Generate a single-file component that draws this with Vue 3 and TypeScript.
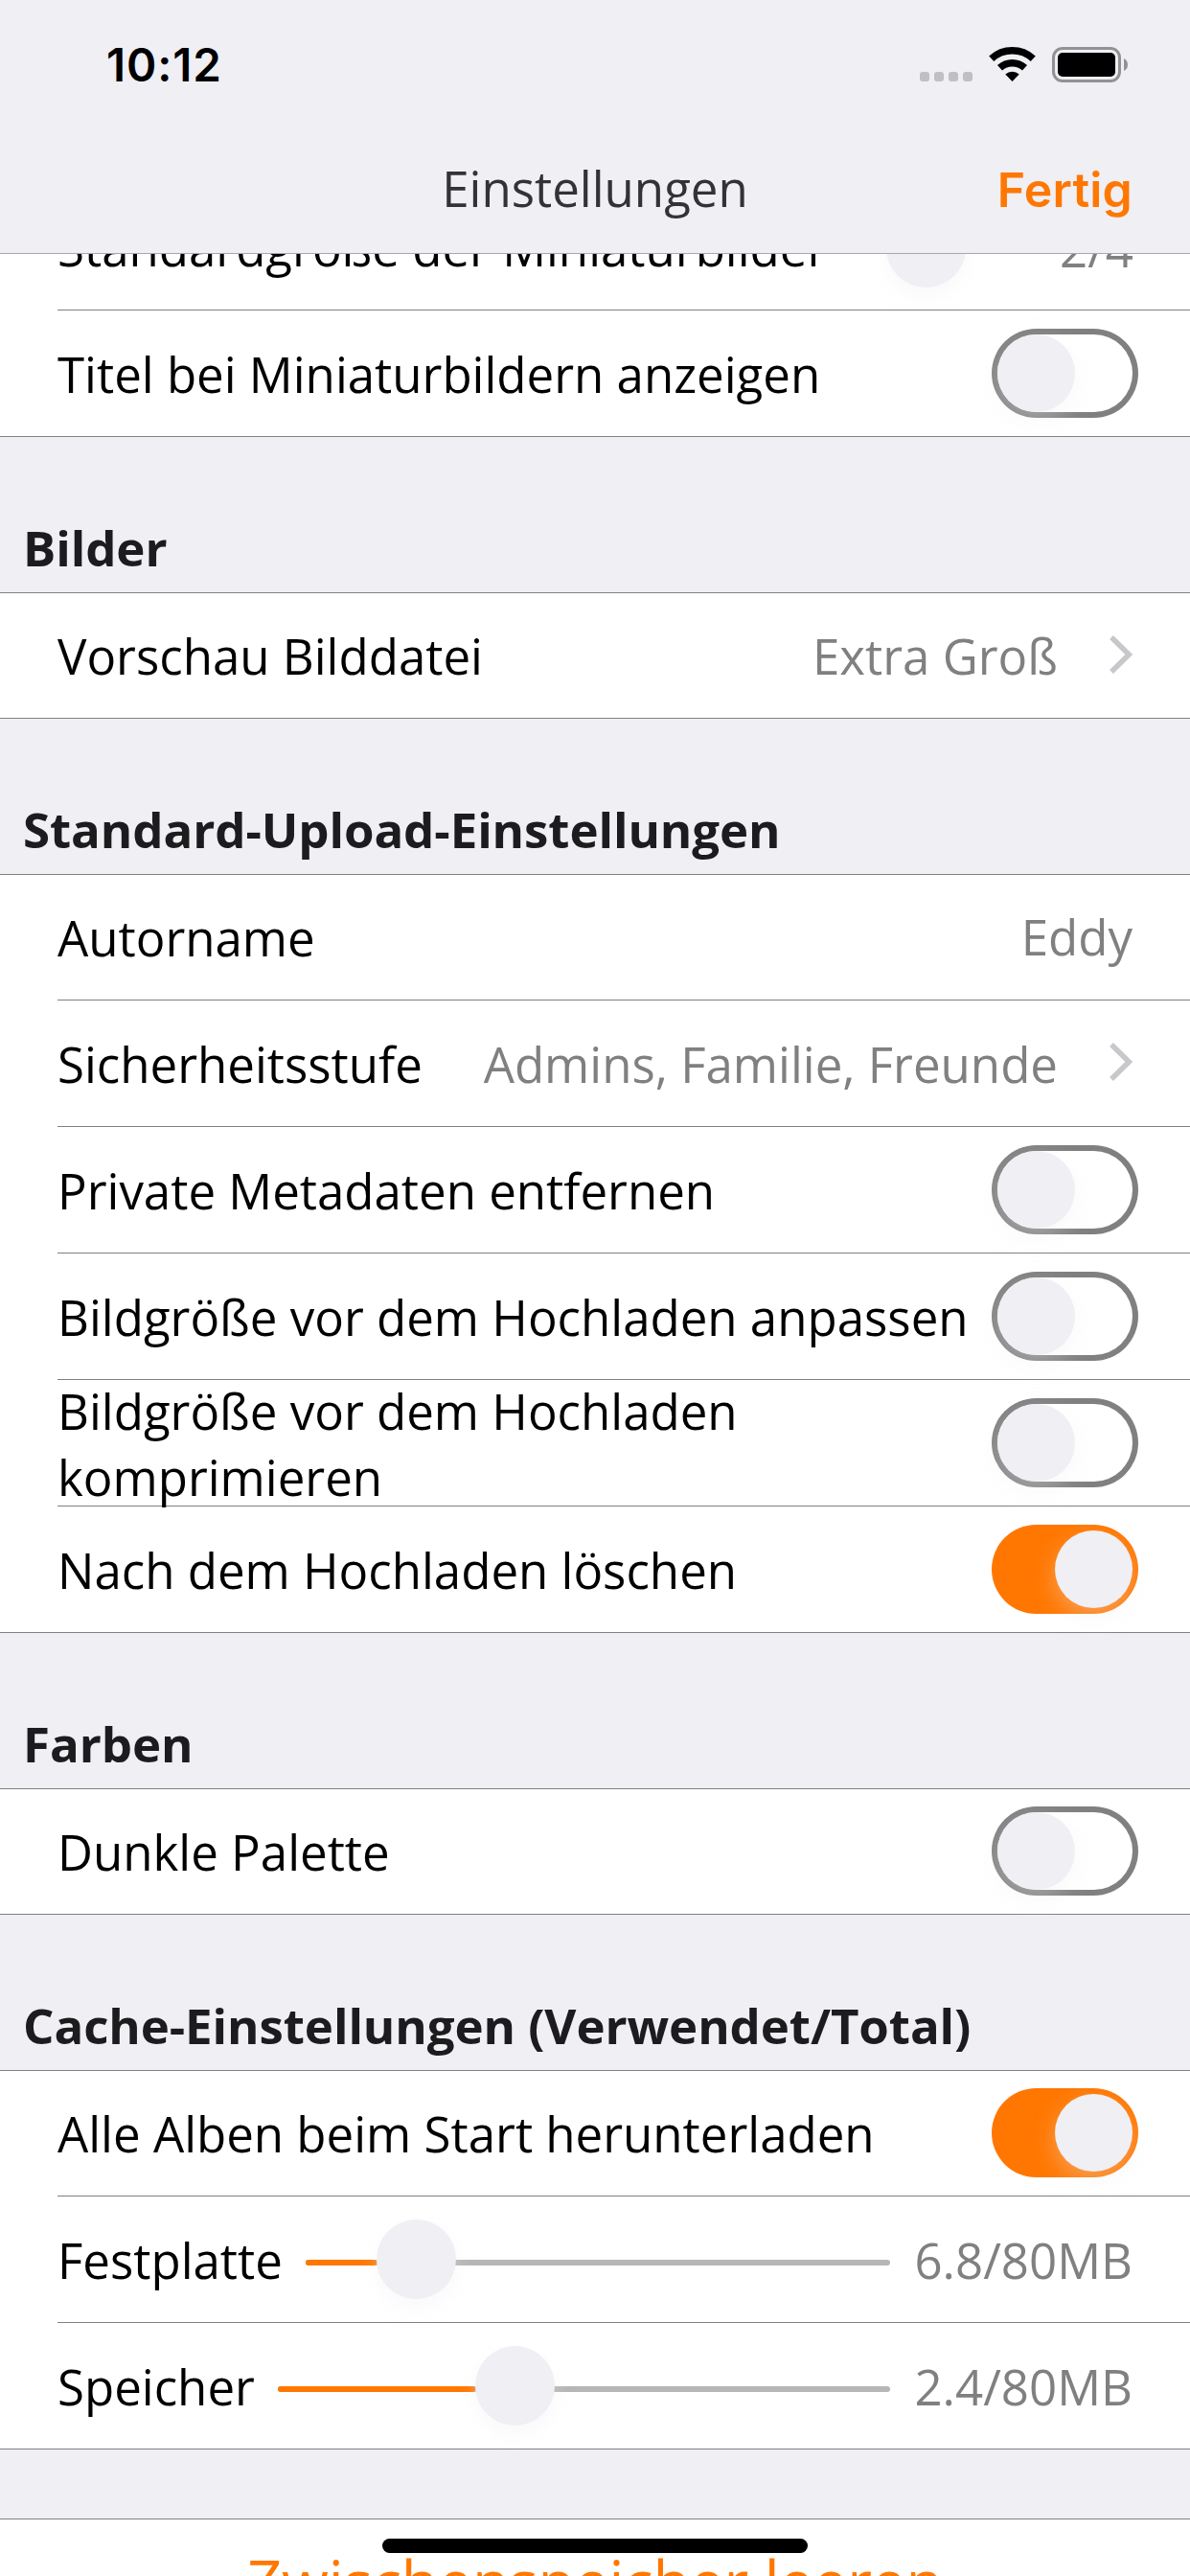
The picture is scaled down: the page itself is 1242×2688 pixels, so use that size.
<script setup lang="ts">
interface Row {
  label: string
  kind: 'switch' | 'link' | 'value' | 'slider'
  on?: boolean
  value?: string
  trackWidth?: number
  thumb?: number
}
interface Group {
  title: string
  rows: Row[]
}

const groups: Group[] = [
  {
    title: '',
    rows: [
      { label: 'Standardgröße der Miniaturbilder', kind: 'slider', value: '2/4', trackWidth: 205, thumb: 49 },
      { label: 'Titel bei Miniaturbildern anzeigen', kind: 'switch', on: false },
    ],
  },
  {
    title: 'Bilder',
    rows: [{ label: 'Vorschau Bilddatei', kind: 'link', value: 'Extra Groß' }],
  },
  {
    title: 'Standard-Upload-Einstellungen',
    rows: [
      { label: 'Autorname', kind: 'value', value: 'Eddy' },
      { label: 'Sicherheitsstufe', kind: 'link', value: 'Admins, Familie, Freunde' },
      { label: 'Private Metadaten entfernen', kind: 'switch', on: false },
      { label: 'Bildgröße vor dem Hochladen anpassen', kind: 'switch', on: false },
      { label: 'Bildgröße vor dem Hochladen komprimieren', kind: 'switch', on: false },
      { label: 'Nach dem Hochladen löschen', kind: 'switch', on: true },
    ],
  },
  {
    title: 'Farben',
    rows: [{ label: 'Dunkle Palette', kind: 'switch', on: false }],
  },
  {
    title: 'Cache-Einstellungen (Verwendet/Total)',
    rows: [
      { label: 'Alle Alben beim Start herunterladen', kind: 'switch', on: true },
      { label: 'Festplatte', kind: 'slider', value: '6.8/80MB', trackWidth: 610, thumb: 74 },
      { label: 'Speicher', kind: 'slider', value: '2.4/80MB', trackWidth: 639, thumb: 206 },
    ],
  },
]
</script>

<template>
  <div class="screen">
    <header class="top">
      <div class="status">
        <span class="time">10:12</span>
        <div class="indicators">
          <div class="cell"><i v-for="n in 4" :key="n"></i></div>
          <svg class="wifi" width="50" height="44" viewBox="0 0 50 44">
            <g fill="none" stroke="#000" stroke-width="7.500">
              <path d="M2.750 15.300 A32.200 32.200 0 0 1 46.250 15.300" />
              <path d="M11.500 24.800 A19.250 19.250 0 0 1 37.500 24.800" />
            </g>
            <path d="M24.500 39 L17.300 31.500 A10.700 10.700 0 0 1 31.700 31.500 Z" />
          </svg>
          <svg class="battery" width="81" height="38" viewBox="0 0 81 38">
            <rect x="1.500" y="1.500" width="69" height="34" rx="9.500" fill="none" stroke="#929294" stroke-width="3" />
            <rect x="6" y="6" width="60" height="25" rx="5" />
            <path d="M75 12 Q79 14 79 18.500 Q79 23 75 25 Z" fill="#929294" />
          </svg>
        </div>
      </div>
      <nav class="nav">
        <span></span>
        <h1>Einstellungen</h1>
        <a class="done">Fertig</a>
      </nav>
    </header>

    <main class="content">
      <section v-for="(g, i) in groups" :key="i">
        <h2 v-if="g.title">{{ g.title }}</h2>
        <div class="group" :class="{ scrolled: !g.title }">
          <div v-for="r in g.rows" :key="r.label" class="row" :class="r.kind">
            <span class="label">{{ r.label }}</span>
            <span v-if="r.kind === 'switch'" class="toggle" :class="{ on: r.on }"><i></i></span>
            <template v-else-if="r.kind === 'slider'">
              <span class="track" :style="{ width: r.trackWidth + 'px' }">
                <span class="fill" :style="{ width: r.thumb + 'px' }"></span>
                <i :style="{ left: r.thumb + 'px' }"></i>
              </span>
              <span class="amount">{{ r.value }}</span>
            </template>
            <template v-else>
              <span class="detail">{{ r.value }}</span>
              <svg v-if="r.kind === 'link'" class="chevron" width="24" height="40" viewBox="0 0 24 40">
                <path d="M2 2 L20.300 20 L2 38" fill="none" stroke="#c7c7cc" stroke-width="5.500" />
              </svg>
            </template>
          </div>
        </div>
      </section>
      <section class="clear">Zwischenspeicher leeren</section>
    </main>
    <div class="home"></div>
  </div>
</template>

<style>
body {
  margin: 0;
}
</style>

<style scoped>
.screen {
  position: relative;
  width: 1242px;
  height: 2688px;
  overflow: hidden;
  display: flex;
  flex-direction: column;
  background: #efeff4;
  font-family: 'Open Sans', sans-serif;
  font-size: 51px;
  line-height: 69px;
  color: #000;
}
.top {
  flex: none;
  box-sizing: border-box;
  height: 265px;
  border-bottom: 1px solid #a9a9ac;
  background: #efeff4;
}
.status {
  display: flex;
  justify-content: space-between;
  height: 132px;
  padding: 0 63px 0 111px;
}
.time {
  margin-top: 33px;
  font-family: Inter, sans-serif;
  font-weight: 600;
  font-size: 47.5px;
  letter-spacing: 0.9px;
}
.indicators {
  display: flex;
  align-items: flex-start;
}
.cell {
  display: flex;
  gap: 5px;
  margin: 75px 17px 0 0;
}
.cell i {
  width: 10px;
  height: 10px;
  border-radius: 3px;
  background: #c0c0c3;
}
.wifi {
  margin: 46px 16px 0 0;
}
.battery {
  margin-top: 49px;
}
.nav {
  display: grid;
  grid-template-columns: 1fr auto 1fr;
  align-items: center;
  height: 132px;
  padding: 0 60px;
}
h1 {
  margin: 0 0 4px;
  font-size: 51px;
  font-weight: 400;
  color: #333336;
}
.done {
  justify-self: end;
  font-family: Inter, sans-serif;
  font-weight: 600;
  font-size: 50px;
  letter-spacing: 0.2px;
  color: #ff7700;
}
.content {
  flex: 1;
  min-height: 0;
  overflow: hidden;
}
h2 {
  box-sizing: border-box;
  height: 162px;
  margin: 0;
  padding: 81px 24px 0;
  font-size: 51px;
  line-height: 69px;
  font-weight: 700;
  letter-spacing: -0.08px;
  color: #1c1c1e;
}
.group {
  border-top: 1px solid #808080;
  border-bottom: 1px solid #808080;
  background: #fff;
}
.scrolled {
  margin-top: -73px;
}
.row {
  display: flex;
  align-items: center;
  height: 131px;
  margin-left: 60px;
  padding-right: 60px;
}
.row:first-child {
  height: 130px;
}
.row + .row {
  border-top: 1px solid #808080;
}
.label {
  margin-right: auto;
  padding-top: 2px;
}
.slider .label {
  white-space: nowrap;
}
.detail,
.amount {
  padding-top: 2px;
  color: #808080;
  white-space: nowrap;
}
.row:first-child .label,
.row:first-child .detail {
  padding-top: 1px;
}
.row.value .detail {
  padding: 0 0 1px;
}
.toggle {
  flex: none;
  box-sizing: border-box;
  width: 153px;
  height: 93px;
  margin: 0 -6px 0 15px;
  padding: 6px;
  border-radius: 47px;
  box-shadow: inset 0 0 0 6px #808080;
}
.row:first-child .toggle {
  margin-bottom: 1px;
}
.toggle i {
  display: block;
  width: 81px;
  height: 81px;
  border-radius: 50%;
  background: #efeff4;
  box-shadow: 0 9px 24px rgba(239, 239, 244, 0.35);
}
.toggle.on {
  background: #ff7700;
  box-shadow: none;
}
.toggle.on i {
  margin-left: auto;
}
.track {
  position: relative;
  flex: none;
  height: 6px;
  margin-top: 7px;
  border-radius: 3px;
  background: #b6b6b6;
}
.fill {
  display: block;
  height: 6px;
  border-radius: 3px;
  background: #ff7700;
}
.track i {
  position: absolute;
  top: -42px;
  width: 83px;
  height: 83px;
  border-radius: 50%;
  background: #efeff4;
  box-shadow: 0 9px 18px rgba(239, 239, 244, 0.35);
}
.amount {
  width: 228px;
  margin-left: 25px;
  text-align: right;
}
.scrolled .amount {
  width: 76px;
}
.chevron {
  flex: none;
  margin: -3px 0 0 54px;
}
.clear {
  margin-top: 72px;
  height: 132px;
  border-top: 1px solid #808080;
  background: #fff;
  text-align: center;
  color: #ff7700;
  font-size: 63px;
  line-height: 128px;
}
.home {
  position: absolute;
  left: 399px;
  bottom: 24px;
  width: 444px;
  height: 15px;
  border-radius: 8px;
  background: #000;
}
</style>
